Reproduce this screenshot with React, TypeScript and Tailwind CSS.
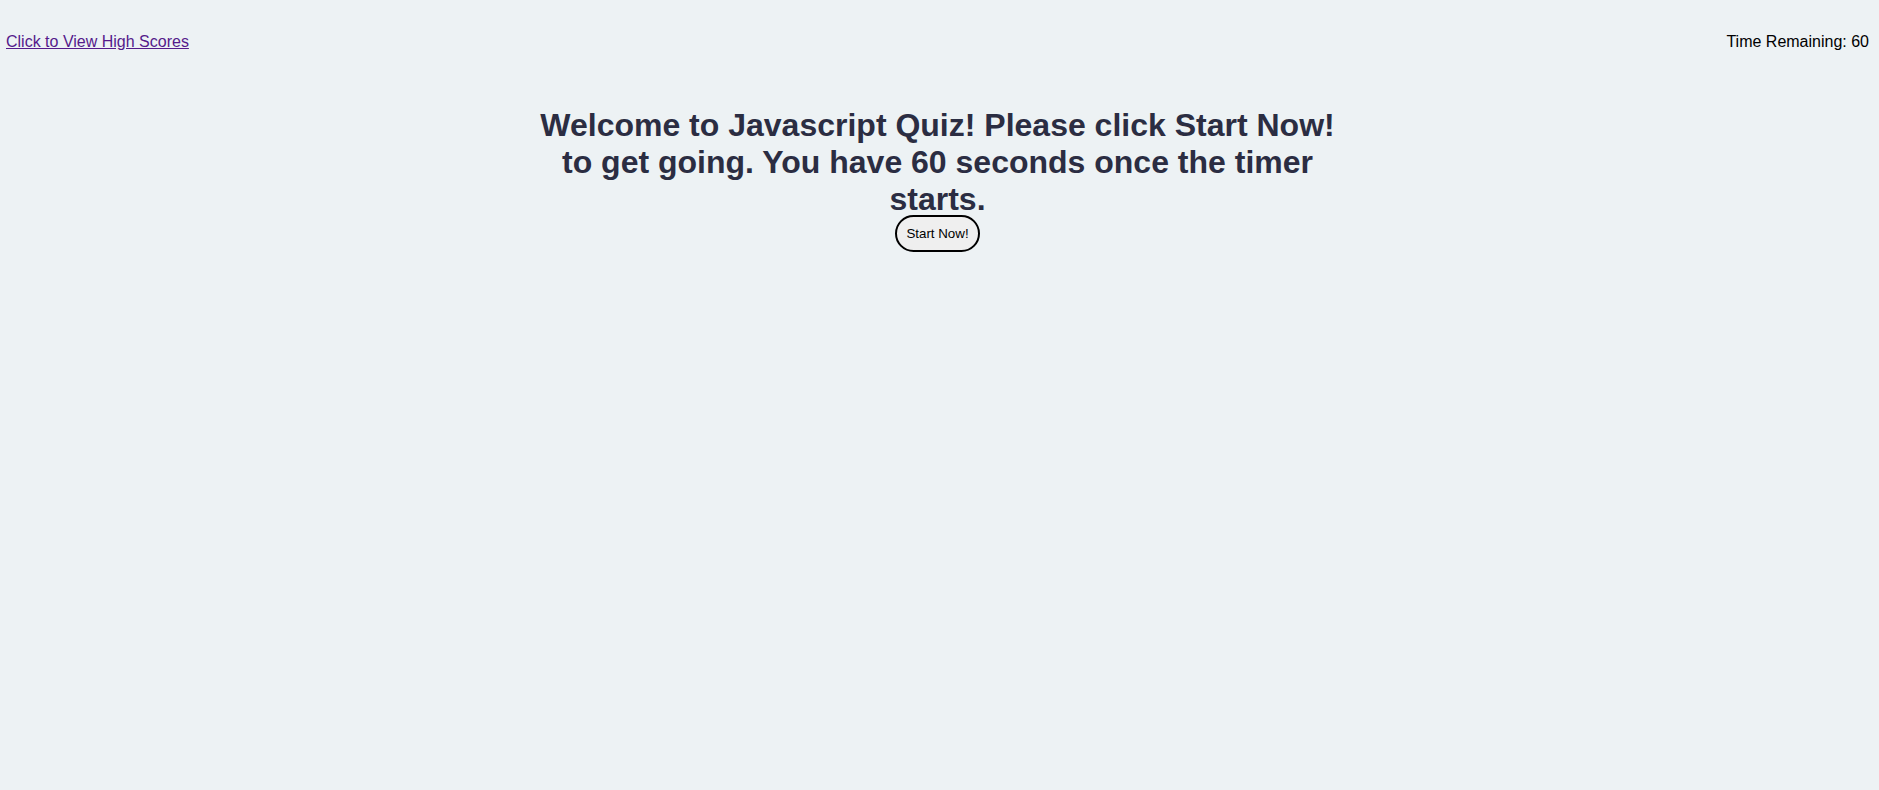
export default function App() {
  return (
    <div
      className="min-h-[790px] w-full bg-[#edf2f4] text-black"
      style={{ fontFamily: '"Liberation Sans", Arial, sans-serif' }}
    >
      <header className="flex items-start justify-between pl-[6px] pr-[10px] pt-[33px] text-base leading-[18px]">
        <a href="#" className="text-[#551a8b] underline">
          Click to View High Scores
        </a>
        <p>Time Remaining: 60</p>
      </header>

      <main className="mt-[56px] flex flex-col items-center">
        <h1 className="mr-[4px] w-[810px] text-center text-[32px] font-bold leading-[36.8px] text-[#2b2d42]">
          Welcome to Javascript Quiz! Please click Start Now! to get going. You have 60 seconds once the timer starts.
        </h1>
        <button className="-mt-[2px] mr-[4px] rounded-full border-2 border-black bg-[#efefef] px-[9px] py-[9px] text-[13.33px] leading-[15px]">
          Start Now!
        </button>
      </main>
    </div>
  )
}
